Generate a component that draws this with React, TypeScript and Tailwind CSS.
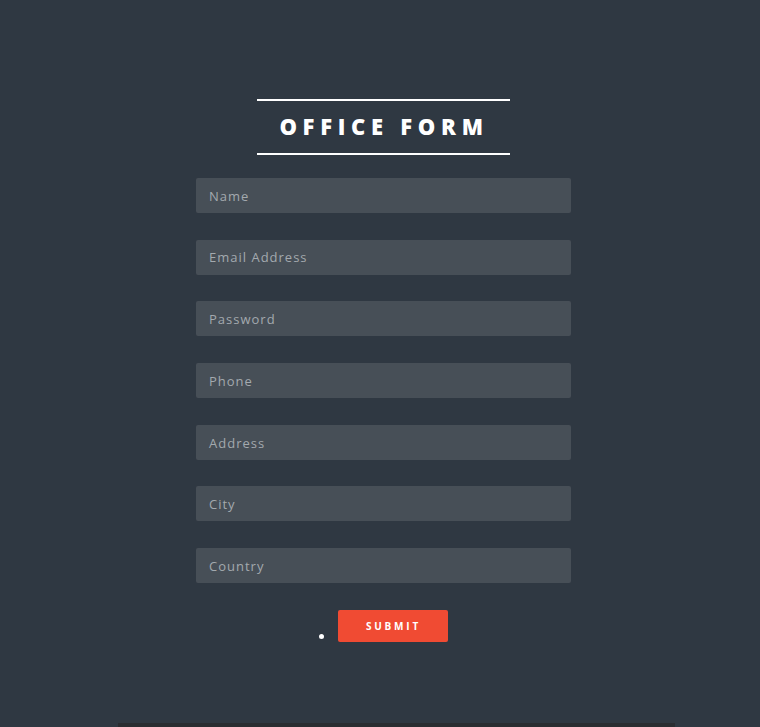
import React from "react";

const fields = ["Name", "Email Address", "Password", "Phone", "Address", "City", "Country"];

export default function App() {
  return (
    <div className="w-[760px] h-[727px] bg-[#2f3842] flex flex-col items-center overflow-hidden" style={{ fontFamily: '"Open Sans", sans-serif' }}>
      <div className="mt-[99px] w-[253px] border-t-2 border-b-2 border-white flex items-center justify-center h-[56px] ml-[7px]">
        <span className="text-white font-extrabold text-[22px] tracking-[5.7px] pl-[1px] pb-[3px] leading-none">OFFICE FORM</span>
      </div>
      <div className="mt-[23px] flex flex-col gap-[26.7px] w-[375px] ml-[7px]">
        {fields.map((f) => (
          <div key={f} className="h-[35px] bg-[#474f57] rounded-[2px] flex items-center pl-[13px] pt-[2px] text-[13px] tracking-[1px] text-[#a3a9ae]">
            {f}
          </div>
        ))}
      </div>
      <div className="mt-[27px] flex items-end ml-[6px]">
        <div className="w-[5px] h-[5px] rounded-full bg-white mr-[14px] mb-[3px]"></div>
        <div className="w-[110px] h-[32px] bg-[#f04b33] rounded-[2px] flex items-center justify-center text-white font-bold text-[10px] tracking-[2.8px] pl-[2px]">SUBMIT</div>
      </div>
      <div className="flex-1"></div>
      <div className="w-[557px] h-[4px] bg-[#2a2d31] ml-[32px]"></div>
    </div>
  );
}
